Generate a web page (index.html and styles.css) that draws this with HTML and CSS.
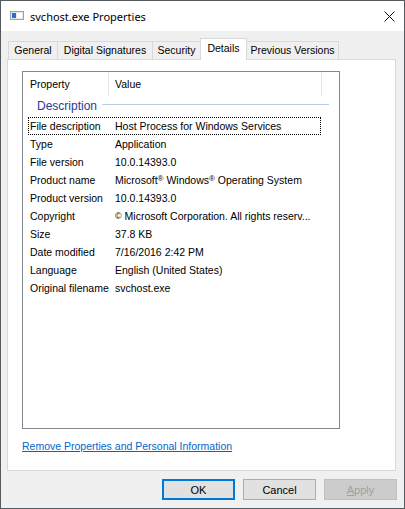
FILE: index.html
```html
<!DOCTYPE html>
<html lang="en">
<head>
<meta charset="utf-8">
<title>svchost.exe Properties</title>
<link rel="stylesheet" href="styles.css">
</head>
<body>
<div class="window">
  <div class="titlebar">
    <svg class="appicon" width="14" height="9" viewBox="0 0 14 9">
      <rect x="0.5" y="0.5" width="13" height="8" fill="#e8e8e8" stroke="#9aa3ad"/>
      <rect x="2" y="2" width="4" height="5" fill="#1f6fd6"/>
      <rect x="7" y="2" width="5" height="5" fill="#ffffff"/>
    </svg>
    <span class="title">svchost.exe Properties</span>
    <svg class="close" width="11" height="11" viewBox="0 0 11 11">
      <path d="M0.5 0.5 L10.5 10.5 M10.5 0.5 L0.5 10.5" stroke="#111" stroke-width="1" fill="none"/>
    </svg>
  </div>
  <div class="content">
    <div class="tabs">
      <div class="tab t-general">General</div>
      <div class="tab t-digital">Digital Signatures</div>
      <div class="tab t-security">Security</div>
      <div class="tab t-details selected">Details</div>
      <div class="tab t-previous last">Previous Versions</div>
    </div>
    <div class="panel">
      <div class="list">
        <div class="list-head">
          <div class="hcol hcol-prop">Property</div>
          <div class="hcol hcol-val">Value</div>
        </div>
        <div class="group"><span class="group-name">Description</span><i class="group-line"></i></div>
        <div class="row focus"><span class="k">File description</span><span class="v">Host Process for Windows Services</span></div>
        <div class="row"><span class="k">Type</span><span class="v">Application</span></div>
        <div class="row"><span class="k">File version</span><span class="v">10.0.14393.0</span></div>
        <div class="row"><span class="k">Product name</span><span class="v">Microsoft<span class="mark">®</span> Windows<span class="mark">®</span> Operating System</span></div>
        <div class="row"><span class="k">Product version</span><span class="v">10.0.14393.0</span></div>
        <div class="row"><span class="k">Copyright</span><span class="v"><span class="mark copy">©</span> Microsoft Corporation. All rights reserv...</span></div>
        <div class="row"><span class="k">Size</span><span class="v">37.8 KB</span></div>
        <div class="row"><span class="k">Date modified</span><span class="v">7/16/2016 2:42 PM</span></div>
        <div class="row"><span class="k">Language</span><span class="v">English (United States)</span></div>
        <div class="row"><span class="k">Original filename</span><span class="v">svchost.exe</span></div>
      </div>
      <a class="link" href="#">Remove Properties and Personal Information</a>
    </div>
    <div class="buttons">
      <button class="btn default">OK</button>
      <button class="btn">Cancel</button>
      <button class="btn disabled"><u>A</u>pply</button>
    </div>
  </div>
</div>
</body>
</html>
```

FILE: styles.css
```css
* { box-sizing: border-box; }
html, body { margin: 0; padding: 0; background: #f0f0f0; }
body { font-family: "Liberation Sans", Arial, sans-serif; font-size: 10.5px; color: #000; }

.window {
  width: 405px;
  height: 509px;
  border: 1px solid #555a60;
  background: #f0f0f0;
  display: flex;
  flex-direction: column;
}

.titlebar {
  height: 30px;
  background: #fff;
  display: flex;
  align-items: center;
  flex: none;
}
.appicon { margin-left: 9px; flex: none; margin-top: -1px; }
.title {
  margin-left: 6px;
  font-family: "Noto Sans", "Open Sans", sans-serif;
  font-size: 11px;
  color: #000;
}
.close { margin-left: auto; margin-right: 9px; flex: none; }

.content { flex: 1; display: flex; flex-direction: column; }

.tabs {
  margin-top: 7px;
  padding-left: 7px;
  height: 22px;
  margin-bottom: -1px;
  display: flex;
  align-items: flex-end;
  position: relative;
  z-index: 1;
}
.tab {
  height: 19px;
  border-top: 1px solid #d9d9d9;
  border-left: 1px solid #d9d9d9;
  border-bottom: 1px solid #d9d9d9;
  background: #f0f0f0;
  line-height: 17px;
  text-align: center;
  white-space: nowrap;
}
.tab.last { border-right: 1px solid #d9d9d9; }
.t-general { width: 49px; }
.t-digital { width: 95px; }
.t-security { width: 48px; }
.t-details { width: 47px; }
.t-previous { width: 93px; }
.tab.selected {
  height: 22px;
  background: #fff;
  border-bottom: none;
  border-right: 1px solid #d9d9d9;
  padding-top: 1px;
  margin-right: -1px;
}

.panel {
  margin-left: 6px;
  width: 389px;
  height: 412px;
  border: 1px solid #d9d9d9;
  background: #fff;
  padding: 11px 0 0 14px;
  flex: none;
}

.list {
  width: 318px;
  height: 358px;
  border: 1px solid #828790;
  background: #fff;
}
.list-head { display: flex; height: 24px; }
.hcol {
  line-height: 24px;
  border-right: 1px solid #e5e5e5;
}
.hcol-prop { width: 86px; padding-left: 7px; }
.hcol-val { width: 213px; padding-left: 6px; }

.group {
  height: 21px;
  display: flex;
  align-items: center;
  padding: 0 10px 2px 14px;
}
.group-name { color: #1e3c9a; font-size: 12px; }
.group-line {
  flex: 1;
  height: 1px;
  background: #bccbe6;
  margin-left: 5px;
  margin-bottom: 2px;
}

.row {
  margin-left: 5px;
  width: 293px;
  height: 18px;
  border: 1px solid transparent;
  padding-left: 1px;
  display: flex;
  line-height: 16px;
  white-space: nowrap;
}
.row.focus { border: 1px dotted #000; }
.k { width: 85px; flex: none; }
.v { flex: none; }
.mark { font-size: 8px; vertical-align: 3px; line-height: 0; }
.mark.copy { font-size: 9px; vertical-align: 1px; }

.link {
  display: inline-block;
  margin-top: 11px;
  line-height: 13px;
  color: #0066cc;
  text-decoration: underline;
}

.buttons {
  margin-top: 8px;
  display: flex;
  justify-content: flex-end;
  gap: 8px;
  padding-right: 7px;
}
.btn {
  width: 73px;
  height: 21px;
  border: 1px solid #adadad;
  background: #e1e1e1;
  font-family: "Liberation Sans", Arial, sans-serif;
  font-size: 11px;
  color: #000;
  padding: 0;
  margin: 0;
}
.btn.default { border: 2px solid #0078d7; }
.btn.disabled { background: #cccccc; border-color: #bfbfbf; color: #a0a0a0; }
```
